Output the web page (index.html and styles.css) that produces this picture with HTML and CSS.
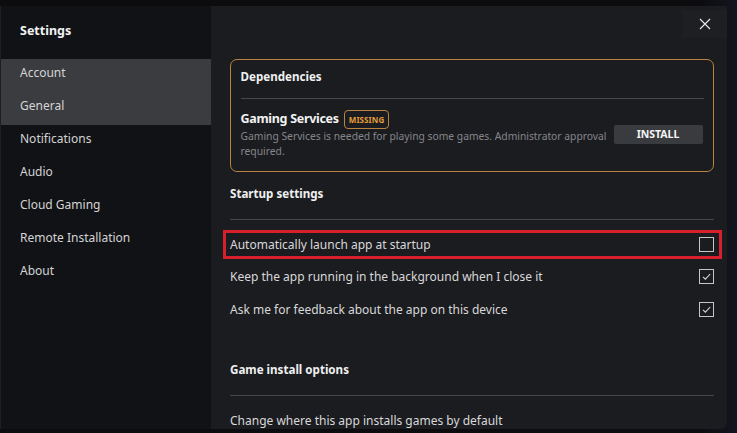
FILE: index.html
```html
<!DOCTYPE html>
<html>
<head>
<meta charset="utf-8">
<link rel="stylesheet" href="styles.css">
</head>
<body>
<div class="backdrop">
  <div class="dialog">
    <aside class="sidebar">
      <h1 class="title">Settings</h1>
      <nav class="nav">
        <div class="nav-item active">Account</div>
        <div class="nav-item active">General</div>
        <div class="nav-item">Notifications</div>
        <div class="nav-item">Audio</div>
        <div class="nav-item">Cloud Gaming</div>
        <div class="nav-item">Remote Installation</div>
        <div class="nav-item">About</div>
      </nav>
    </aside>
    <main class="content">
      <div class="topbar">
        <button class="close" aria-label="Close">
          <svg width="12" height="12" viewBox="0 0 12 12"><path d="M1 1 L11 11 M11 1 L1 11" stroke="#e6e6e6" stroke-width="1.2" fill="none"/></svg>
        </button>
      </div>
      <section class="card">
        <h2 class="heading">Dependencies</h2>
        <div class="divider card-divider"></div>
        <div class="dep">
          <div class="dep-text">
            <div class="dep-name">Gaming Services <span class="badge">MISSING</span></div>
            <div class="dep-desc">Gaming Services is needed for playing some games. Administrator approval required.</div>
          </div>
          <button class="install">INSTALL</button>
        </div>
      </section>
      <h2 class="heading section-heading">Startup settings</h2>
      <div class="divider"></div>
      <div class="rows">
        <div class="row highlight">
          <span>Automatically launch app at startup</span>
          <span class="check"></span>
        </div>
        <div class="row">
          <span>Keep the app running in the background when I close it</span>
          <span class="check checked"><svg width="13" height="13" viewBox="0 0 13 13"><path d="M3 6.8 L5.4 9.2 L10.2 4" stroke="#d8d8d8" stroke-width="1.1" fill="none"/></svg></span>
        </div>
        <div class="row">
          <span>Ask me for feedback about the app on this device</span>
          <span class="check checked"><svg width="13" height="13" viewBox="0 0 13 13"><path d="M3 6.8 L5.4 9.2 L10.2 4" stroke="#d8d8d8" stroke-width="1.1" fill="none"/></svg></span>
        </div>
      </div>
      <h2 class="heading section-heading game-heading">Game install options</h2>
      <div class="divider"></div>
      <div class="row plain">
        <span>Change where this app installs games by default</span>
      </div>
    </main>
  </div>
</div>
</body>
</html>
```

FILE: styles.css
```css
* { box-sizing: border-box; }
html, body {
  margin: 0;
  padding: 0;
  width: 737px;
  height: 433px;
  overflow: hidden;
  background: #0c0c10;
  font-family: "Noto Sans", "Liberation Sans", sans-serif;
}
.backdrop {
  padding-top: 6px;
  height: 433px;
  background: linear-gradient(90deg, #0c0c0f 0%, #0c0c0f 95%, #141420 100%);
}
.dialog {
  display: flex;
  width: 727px;
  height: 423px;
  border-bottom-right-radius: 6px;
  overflow: hidden;
  background: #1b1c20;
}
.sidebar {
  width: 211px;
  flex: none;
  background: #111216;
  border-left: 1px solid #1e1f23;
}
.title {
  margin: 0;
  padding: 16px 0 0 19px;
  height: 53px;
  font-size: 12.5px;
  font-weight: 700;
  color: #f2f2f2;
}
.nav { display: flex; flex-direction: column; }
.nav-item {
  height: 33px;
  line-height: 28px;
  padding-left: 19px;
  font-size: 12px;
  color: #d4d4d4;
}
.nav-item.active { background: #3b3c40; }
.content {
  flex: 1;
  min-width: 0;
  padding: 0 13px 0 19px;
  display: flex;
  flex-direction: column;
}
.content > * { flex: none; }
.topbar {
  display: flex;
  justify-content: flex-end;
  height: 53px;
  margin-right: -13px;
  padding-top: 4px;
}
.close {
  width: 45px;
  height: 28px;
  border: 0;
  background: #1e1f23;
  display: flex;
  align-items: center;
  justify-content: center;
  padding: 0;
}
.card {
  border: 1.5px solid #b8843f;
  border-radius: 7px;
  padding: 8.5px 9.5px 9.5px 9.5px;
  height: 113px;
}
.heading {
  margin: 0;
  font-size: 11.6px;
  font-weight: 700;
  color: #f0f0f0;
  line-height: 16px;
}
.divider {
  height: 1px;
  background: #46474b;
}
.card-divider { margin-top: 13px; }
.dep {
  display: flex;
  align-items: center;
  margin-top: 11px;
}
.dep-text { flex: 1; min-width: 0; }
.dep-name {
  font-size: 12.5px;
  letter-spacing: -0.3px;
  font-weight: 700;
  color: #f2f2f2;
  display: flex;
  align-items: center;
  gap: 5px;
  line-height: 18px;
}
.badge {
  font-size: 8px;
  font-weight: 700;
  color: #e39c3a;
  border: 1px solid #b8843f;
  border-radius: 4px;
  padding: 3px 4px;
  letter-spacing: 0.1px;
  line-height: 11px;
}
.dep-desc {
  font-size: 10.3px;
  color: #85868a;
  line-height: 15px;
}
.install {
  flex: none;
  width: 89px;
  height: 19px;
  border: 0;
  border-radius: 2px;
  background: #3a3b3f;
  color: #f4f4f4;
  font-family: inherit;
  font-size: 10.5px;
  font-weight: 700;
  padding: 0;
  margin-right: 1px;
}
.section-heading {
  margin-top: 14px;
  padding-bottom: 17px;
}
.rows { display: flex; flex-direction: column; margin-top: 10px; }
.row {
  display: flex;
  align-items: center;
  justify-content: space-between;
  height: 33px;
  font-size: 12px;
  color: #d8d8d8;
}
.row.highlight {
  height: 29px;
  margin: 0 -8px 1px -7px;
  padding: 0 5px 0 4px;
  border: 3px solid #d7202c;
}
.check {
  width: 15px;
  height: 15px;
  border: 1.5px solid #c6c6c6;
  display: flex;
  align-items: center;
  justify-content: center;
}
.game-heading { margin-top: 36px; }
.row.plain { height: 48px; }
```
